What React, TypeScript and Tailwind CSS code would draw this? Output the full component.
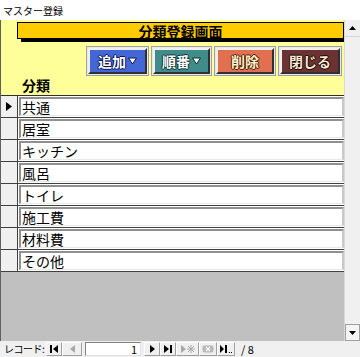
import React from "react";

const items = ["共通", "居室", "キッチン", "風呂", "トイレ", "施工費", "材料費", "その他"];

const jp = { fontFamily: '"Noto Sans CJK JP", "Noto Sans", sans-serif' };

function ActionButton({ label, bg, fill, edge, arrow, w }: { label: string; bg: string; fill: string; edge: string; arrow?: boolean; w: string }) {
    return (
        <div className={`${w} h-[30px] border border-[#a0a0a0] p-[1px] bg-[#e8e8e8]`}>
            <div
                className="h-full w-full flex items-center justify-center gap-[2px] border-2 border-t-[#f0f0f0] border-l-[#f0f0f0] border-r-[#303030] border-b-[#303030] text-[14px] font-bold leading-none"
                style={{ backgroundColor: bg, color: fill, textShadow: `1px 0 0 ${edge}, -1px 0 0 ${edge}, 0 1px 0 ${edge}, 0 -1px 0 ${edge}` }}
            >
                <span>{label}</span>
                {arrow && (
                    <svg width="9" height="8" viewBox="0 0 9 8">
                        <path d="M0.5 1 L8.5 1 L4.5 7 Z" fill={fill} stroke={edge} strokeWidth="1" />
                    </svg>
                )}
            </div>
        </div>
    );
}

function NavBtn({ children, w = "w-[16px]" }: { children: React.ReactNode; w?: string }) {
    return (
        <div className={`${w} h-[14px] flex items-center justify-center border border-t-white border-l-white border-r-[#a0a0a0] border-b-[#a0a0a0]`}>
            {children}
        </div>
    );
}

function App() {
    return (
        <div className="w-[360px] h-[357px] bg-white flex flex-col overflow-hidden" style={jp}>
            {/* title */}
            <div className="h-[20px] flex items-center px-[3px] text-[10px] text-black">マスター登録</div>

            <div className="h-[321px] flex">
                <div className="w-[1px] bg-[#606060]" />

                <div className="flex-1 flex flex-col">
                    {/* header */}
                    <div className="h-[76px] bg-[#ffff99] flex flex-col border-b border-[#303030]">
                        <div className="mt-[2px] ml-[16px] h-[17px] bg-[#ffcc00] border border-black shadow-[4px_3px_0_#000] flex items-center justify-center text-[14px] font-bold text-black leading-none">
                            分類登録画面
                        </div>
                        <div className="mt-[7px] flex justify-end gap-[2px] pr-[2px]">
                            <ActionButton label="追加" bg="#4467d8" fill="#ffffff" edge="#0a1450" arrow w="w-[63px]" />
                            <ActionButton label="順番" bg="#3f8c8a" fill="#ffffff" edge="#0a2c2c" arrow w="w-[61px]" />
                            <ActionButton label="削除" bg="#e07050" fill="#fff2c8" edge="#4a1a0a" w="w-[62px]" />
                            <ActionButton label="閉じる" bg="#6b3232" fill="#fbe9d4" edge="#1a0505" w="w-[64px]" />
                        </div>
                        <div className="ml-[21px] mt-[1px] text-[14px] font-bold text-black leading-[17px]">分類</div>
                    </div>

                    {/* rows */}
                    <div className="flex flex-col">
                        {items.map((name, i) => (
                            <div key={name} className="h-[22px] flex border-b border-[#404040]">
                                <div className="w-[17px] bg-[#f0f0f0] border-r border-[#404040] flex items-center justify-center">
                                    {i === 0 && (
                                        <svg width="6" height="9" viewBox="0 0 6 9">
                                            <path d="M0 0 L6 4.5 L0 9 Z" fill="#000" />
                                        </svg>
                                    )}
                                </div>
                                <div className="flex-1 ml-[1px] mt-[1px] mb-[1px] bg-white border-t-2 border-l-2 border-t-[#909090] border-l-[#909090] border-r-2 border-b border-r-[#c8c8c8] border-b-[#e8e8e8] flex items-center pl-[1px] text-[14px] text-black leading-none">
                                    {name}
                                </div>
                            </div>
                        ))}
                    </div>

                    <div className="flex-1 bg-[#c0c0c0]" />
                </div>

                {/* scrollbar */}
                <div className="w-[16px] bg-[#f0f0f0] border-l border-[#d8d8d8] flex flex-col justify-between">
                    <div className="h-[17px] flex items-center justify-center border-b border-[#d8d8d8]">
                        <svg width="7" height="4" viewBox="0 0 7 4"><path d="M3.5 0 L7 4 L0 4 Z" fill="#000" /></svg>
                    </div>
                    <div className="h-[17px] flex items-center justify-center border border-[#a0a0a0] bg-[#f4f4f4]">
                        <svg width="7" height="4" viewBox="0 0 7 4"><path d="M0 0 L7 0 L3.5 4 Z" fill="#000" /></svg>
                    </div>
                </div>
            </div>

            {/* record navigator */}
            <div className="h-[16px] bg-[#f0f0f0] flex items-center text-[11px] text-black leading-none">
                <span className="ml-[4px] w-[42px] whitespace-nowrap text-[10px] tracking-[-0.5px]">レコード:</span>
                <div className="flex items-center">
                    <NavBtn>
                        <svg width="8" height="8" viewBox="0 0 8 8"><rect x="0" y="0" width="2" height="8" fill="#000" /><path d="M8 0 L3 4 L8 8 Z" fill="#000" /></svg>
                    </NavBtn>
                    <NavBtn w="w-[20px]">
                        <svg width="5" height="8" viewBox="0 0 5 8"><path d="M5 0 L0 4 L5 8 Z" fill="#a8a8a8" /></svg>
                    </NavBtn>
                </div>
                <div className="ml-[3px] w-[56px] h-[14px] bg-white border border-t-[#808080] border-l-[#808080] border-r-[#e0e0e0] border-b-[#e0e0e0] flex items-center justify-end pr-[3px]">1</div>
                <div className="ml-[3px] flex items-center">
                    <NavBtn>
                        <svg width="5" height="8" viewBox="0 0 5 8"><path d="M0 0 L5 4 L0 8 Z" fill="#000" /></svg>
                    </NavBtn>
                    <NavBtn>
                        <svg width="8" height="8" viewBox="0 0 8 8"><path d="M0 0 L5 4 L0 8 Z" fill="#000" /><rect x="6" y="0" width="2" height="8" fill="#000" /></svg>
                    </NavBtn>
                    <NavBtn w="w-[23px]">
                        <svg width="14" height="8" viewBox="0 0 14 8">
                            <path d="M0 0 L5 4 L0 8 Z" fill="#a8a8a8" />
                            <path d="M10 0 V8 M6 4 H14 M7 1 L13 7 M13 1 L7 7" stroke="#a8a8a8" strokeWidth="1" />
                        </svg>
                    </NavBtn>
                    <NavBtn w="w-[18px]">
                        <svg width="12" height="8" viewBox="0 0 12 8">
                            <rect x="0.5" y="0.5" width="11" height="7" rx="2" fill="#b8b8b8" />
                            <path d="M4 2 L8 6 M8 2 L4 6" stroke="#ffffff" strokeWidth="1.2" />
                        </svg>
                    </NavBtn>
                    <NavBtn w="w-[18px]">
                        <svg width="13" height="8" viewBox="0 0 13 8">
                            <path d="M0 0 L4 4 L0 8 Z" fill="#000" />
                            <rect x="5" y="0" width="2" height="8" fill="#000" />
                            <rect x="9" y="7" width="1" height="1" fill="#000" />
                            <rect x="11" y="7" width="1" height="1" fill="#000" />
                        </svg>
                    </NavBtn>
                </div>
                <span className="ml-[6px]">/ 8</span>
            </div>
        </div>
    );
}

export default App;
